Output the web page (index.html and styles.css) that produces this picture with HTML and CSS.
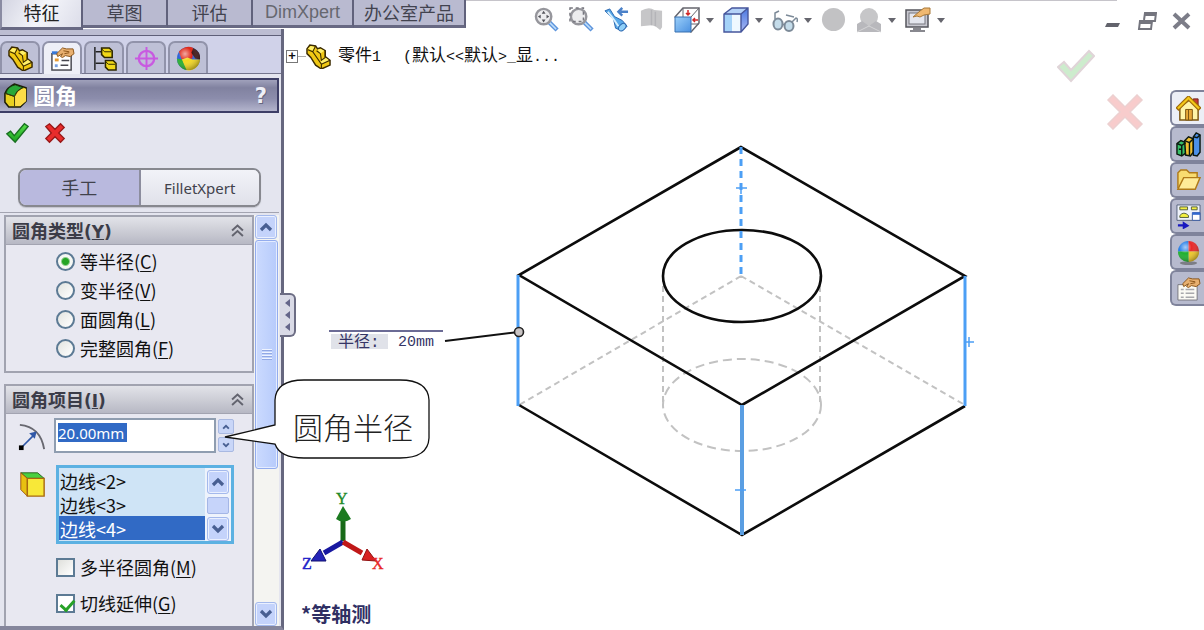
FILE: index.html
```html
<!DOCTYPE html>
<html lang="zh-CN">
<head>
<meta charset="utf-8">
<title>零件1 - 圆角</title>
<link rel="stylesheet" href="styles.css">
</head>
<body>
<svg class="defs" aria-hidden="true">
  <defs>
    <linearGradient id="blueFace" x1="0" y1="0" x2="1" y2="1"><stop offset="0" stop-color="#9cd0fa"/><stop offset="1" stop-color="#4a90e0"/></linearGradient>
    <linearGradient id="blueSide" x1="0" y1="0" x2="0" y2="1"><stop offset="0" stop-color="#4a78e0"/><stop offset="1" stop-color="#a8b8f4"/></linearGradient>
    <linearGradient id="greenTick" x1="0" y1="0" x2="0" y2="1"><stop offset="0" stop-color="#58e048"/><stop offset="1" stop-color="#18a020"/></linearGradient>
    <radialGradient id="shine" cx=".35" cy=".3" r=".75"><stop offset="0" stop-color="#fff" stop-opacity=".6"/><stop offset=".4" stop-color="#fff" stop-opacity="0"/><stop offset="1" stop-color="#000" stop-opacity=".35"/></radialGradient>
    <symbol id="part" viewBox="0 0 26 26">
      <path d="M1 5l3-4 6 1 2 3 3-1 5 3v6l5 4v5l-9 4-6-4-5-8-4-4z" fill="#f0c814" stroke="#3a2a00" stroke-width="1.500"/>
      <path d="M2 5l3-3 4 1-2 4zM12 6l3-1 4 2-4 3zM15 18l5-4 4 3-7 4z" fill="#fff06a"/>
      <path d="M2 6l5 2 9 13v4M7 8l3-6M15 10l1 7 4-3V7M15 10l-4-3M16 21l9-4" stroke="#3a2a00" stroke-width="1.100" fill="none"/>
    </symbol>
    <symbol id="hand" viewBox="0 0 26 26">
      <path d="M7 8l6-6 4 1 7 0 1 5-4 3-5-1-3 2-2-1 2-3-5 3z" fill="#e8b070" stroke="#8a5418"/>
      <path d="M14 5l6 1M15 8l5-1" stroke="#8a5418" fill="none"/>
    </symbol>
    <symbol id="props" viewBox="0 0 26 26">
      <rect x="2" y="8" width="20" height="17" fill="#fff" stroke="#46464e" stroke-width="1.5"/>
      <path d="M2 7h6" stroke="#3878d8" stroke-width="3"/>
      <rect x="5" y="13" width="4" height="3" fill="#e89a30"/><rect x="5" y="19" width="3" height="3" fill="#78a0e0"/>
      <path d="M12 15h8M11 20h8" stroke="#46464e" stroke-width="1.5"/>
      <use href="#hand"/>
    </symbol>
    <symbol id="config" viewBox="0 0 26 26">
      <path d="M3 1v24M4 6h8M4 18h9" stroke="#222" stroke-width="1.5"/>
      <path d="M10 2h8l3 3v7h-8l-3-3zM14 15h8l3 3v7h-8l-3-3z" fill="#f0d818" stroke="#2c2600" stroke-width="1.6"/>
      <path d="M10 3l3 3h7M14 16l3 3h7" stroke="#2c2600" fill="none"/>
    </symbol>
    <symbol id="target" viewBox="0 0 26 26">
      <path d="M13 5v8H5a8 8 0 0 1 8-8zM13 13h8a8 8 0 0 1-8 8z" fill="#d8a0ea" opacity=".5"/>
      <g fill="none" stroke="#c85ae0" stroke-width="2.4"><circle cx="13" cy="13" r="8"/><path d="M13 1v24M1 13h24" stroke-width="2"/></g>
    </symbol>
    <symbol id="ball" viewBox="0 0 26 26">
      <circle cx="13" cy="13" r="12" fill="#2c62d8"/>
      <path d="M3 6a12 12 0 0 1 15-4l-1 11-11 1z" fill="#e02818"/><path d="M18 2a12 12 0 0 1 7 12l-5-1-4-6z" fill="#401818"/>
      <path d="M6 14l6-2 5 2 8 0A12 12 0 0 1 10 25z" fill="#f4d820"/><path d="M1 13l5 1 5 11A12 12 0 0 1 1 13z" fill="#28b030"/>
      <circle cx="13" cy="13" r="12" fill="url(#shine)"/>
    </symbol>
    <symbol id="ball4" viewBox="0 0 26 26">
      <ellipse cx="13" cy="24" rx="9" ry="2" fill="#555" opacity=".6"/>
      <path d="M13 12V1A11 11 0 0 0 2 12z" fill="#2880e8"/><path d="M13 12h11A11 11 0 0 0 13 1z" fill="#e82828"/>
      <path d="M13 12v11A11 11 0 0 0 24 12z" fill="#f0c828"/><path d="M13 12H2a11 11 0 0 0 11 11z" fill="#20b030"/>
      <circle cx="13" cy="12" r="11" fill="url(#shine)"/>
    </symbol>
    <symbol id="chev" viewBox="0 0 12 12"><path d="M1 6l5-4.500 5 4.500M1 11l5-4.500 5 4.500" fill="none" stroke="#63646f" stroke-width="1.8"/></symbol>
    <symbol id="up" viewBox="0 0 14 10"><path d="M2 8l5-5 5 5" fill="none" stroke="#485f92" stroke-width="3.200"/></symbol>
    <symbol id="down" viewBox="0 0 14 10"><path d="M2 2l5 5 5-5" fill="none" stroke="#485f92" stroke-width="3.200"/></symbol>
    <symbol id="lens" viewBox="0 0 26 26">
      <path d="M16 16l8 8" stroke="#5c94dc" stroke-width="4.500"/><path d="M16 16l7 7" stroke="#c0defa" stroke-width="1.500"/>
      <circle cx="10" cy="10" r="8" fill="#ececee" stroke="#96969c" stroke-width="2.500"/>
    </symbol>
  </defs>
</svg>

<div class="app">
  <header class="topbar">
    <nav class="ribbon">
      <button class="rtab rtab-on">特征</button>
      <button class="rtab">草图</button>
      <button class="rtab">评估</button>
      <button class="rtab rtab-dim">DimXpert</button>
      <button class="rtab rtab-wide">办公室产品</button>
    </nav>
    <div class="viewtools">
      <button class="tool" aria-label="整屏显示全图"><svg class="ico" viewBox="0 0 26 26"><use href="#lens"/><path d="M10 4l2 3H8zM10 16l2-3H8zM4 10l3-2v4zM16 10l-3-2v4z" fill="#55555c"/></svg></button>
      <button class="tool" aria-label="局部放大"><svg class="ico" viewBox="0 0 26 26"><use href="#lens"/><path d="M1 1h14v14H1z" fill="none" stroke="#77777f" stroke-width="1.500" stroke-dasharray="3 3"/></svg></button>
      <button class="tool" aria-label="上一视图"><svg class="ico" viewBox="0 0 26 26"><path d="M1 4l5-2 5 8 8 4 5 6-5 5-7-3-2-9z" fill="#58a8e8" stroke="#2c68b0"/><path d="M4 5l7 9 4 6" stroke="#d8f0ff" stroke-width="2" fill="none"/><ellipse cx="19" cy="21" rx="4.500" ry="3" transform="rotate(-45 19 21)" fill="#90d0f8" stroke="#2c68b0"/><path d="M25 5h-8M19 1l-4 4 4 4" stroke="#4a80c8" stroke-width="2.500" fill="none"/></svg></button>
      <button class="tool" aria-label="剖面视图"><svg class="ico" viewBox="0 0 26 26"><path d="M2 4q8-5 14-1l8 1v17l-2 3-5-4-4-1-11 1z" fill="#c6c6c8"/><path d="M13 3v16M17 5v15" stroke="#b4b4b8" stroke-width="1.500"/></svg></button>
      <button class="tool tool-menu" aria-label="视图定向"><svg class="ico" viewBox="0 0 26 26"><path d="M1 10L9 1h16v15l-8 9z" fill="#fff" stroke="#66666e" stroke-width="1.500"/><path d="M9 1v9M25 1l-8 9M17 17l8 0" stroke="#66666e"/><path d="M14 3v5M12 6l2 2 2-2M24 13h-5M21 11l-2 2 2 2" stroke="#d02828" fill="none" stroke-width="1.500"/><path d="M1 10h16v15H1z" fill="url(#blueFace)" stroke="#3870b0"/></svg><i class="caret"></i></button>
      <button class="tool tool-menu" aria-label="显示样式"><svg class="ico" viewBox="0 0 26 26"><path d="M1 7l8-6h16l-7 6z" fill="#b4d2f8"/><path d="M18 7l7-6v16l-7 8z" fill="url(#blueSide)"/><path d="M1 7h17v18H1z" fill="#eef8ff"/><path d="M1 7h8v18H1z" fill="#a4d2f8"/><path d="M1 7l8-6h16v16l-7 8H1zM1 7h17v18M18 7l7-6" fill="none" stroke="#46569c" stroke-width="1.400"/></svg><i class="caret"></i></button>
      <button class="tool tool-menu" aria-label="隐藏/显示项目"><svg class="ico" viewBox="0 0 26 26"><g fill="#c4dcea" stroke="#7c8a98" stroke-width="2"><ellipse cx="6" cy="17" rx="4.500" ry="5.500"/><ellipse cx="17" cy="19" rx="4.500" ry="5"/></g><path d="M3 12V6l4-2M10 17l3 1M20 15l4-4q2 0 1 4M14 8l8 2" fill="none" stroke="#7c8a98" stroke-width="1.500"/></svg><i class="caret"></i></button>
      <button class="tool" aria-label="编辑外观"><svg class="ico" viewBox="0 0 26 26"><circle cx="13" cy="13" r="12" fill="#c2c2c4"/></svg></button>
      <button class="tool tool-menu" aria-label="应用布景"><svg class="ico" viewBox="0 0 26 26"><circle cx="13" cy="10" r="9" fill="#c6c6c8"/><path d="M1 25v-8l5-3 7 5 7-5 5 3v8z" fill="#b8b8bc"/><path d="M1 25l12-6 12 6" stroke="#d4d4d6" fill="none"/></svg><i class="caret"></i></button>
      <button class="tool tool-menu" aria-label="视图设定"><svg class="ico" viewBox="0 0 26 26"><rect x="1" y="3" width="22" height="17" fill="#c8c8d0" stroke="#55555c" stroke-width="1.500"/><rect x="4" y="6" width="16" height="11" fill="#e4e6ee" stroke="#77777f"/><path d="M8 21h8v2h4v2H5v-2h3z" fill="#88888f"/><path d="M8 10l7-6 4-3h6v6l-6 1-4 2-3-1z" fill="#f0b870" stroke="#a87838"/></svg><i class="caret"></i></button>
    </div>
    <div class="wincontrols">
      <button class="win" aria-label="最小化"><svg class="wico" viewBox="0 0 20 20"><path d="M3 16l2-4h13l-2 4z" fill="#62636c"/></svg></button>
      <button class="win" aria-label="还原"><svg class="wico" viewBox="0 0 20 20"><path d="M7 9l1-7h11l-1 8h-2M7 4h12M2 18l1-8h12l-1 8zM3 12h12" fill="none" stroke="#74757e" stroke-width="2"/></svg></button>
      <button class="win" aria-label="关闭"><svg class="wico" viewBox="0 0 20 20"><path d="M2 3l15 14M17 3L2 17" stroke="#7c7d88" stroke-width="4"/></svg></button>
    </div>
  </header>

  <div class="body">
    <aside class="panel">
      <div class="ptabs">
        <button class="ptab" aria-label="设计树"><svg class="ico"><use href="#part"/></svg></button>
        <button class="ptab ptab-on" aria-label="属性"><svg class="ico"><use href="#props"/></svg></button>
        <button class="ptab" aria-label="配置"><svg class="ico"><use href="#config"/></svg></button>
        <button class="ptab" aria-label="尺寸"><svg class="ico"><use href="#target"/></svg></button>
        <button class="ptab" aria-label="外观"><svg class="ico"><use href="#ball"/></svg></button>
      </div>
      <div class="ptitle">
        <svg class="ico" viewBox="0 0 26 26"><path d="M2 11Q4 5 12 1l12 4v14l-6 6H6l-4-5z" fill="#e8d020" stroke="#1c1c08" stroke-width="1.600"/><path d="M3 11Q5 3 13 2l8 3q-7 2-9 9z" fill="#28a838" stroke="#103c10"/><path d="M12 14q3-6 8-8l4 0v13l-6 5h-6z" fill="#fcdc48"/><path d="M12 14v10M3 11l9 3q2-6 8-9" fill="none" stroke="#3c3408"/></svg>
        <h1 class="ptext">圆角</h1>
        <button class="help">?</button>
      </div>
      <div class="confirm">
        <button class="plain" aria-label="确定"><svg class="ico" viewBox="0 0 26 26"><path d="M2 14l4-3 4 5L21 3l4 3-14 17z" fill="url(#greenTick)" stroke="#187020" stroke-width="1.500"/></svg></button>
        <button class="plain" aria-label="取消"><svg class="ico" viewBox="0 0 26 26"><path d="M3 6l4-3 6 6 6-6 4 4-6 6 6 6-4 4-6-6-6 6-4-4 6-6z" fill="#e82c2c" stroke="#981818" stroke-width="1.400"/></svg></button>
      </div>
      <div class="modes">
        <button class="mode mode-on">手工</button>
        <button class="mode">FilletXpert</button>
      </div>
      <div class="scroller">
        <div class="groups">
          <section class="group">
            <h2 class="ghead"><span>圆角类型<span class="key">(<u>Y</u>)</span></span><svg class="chev"><use href="#chev"/></svg></h2>
            <div class="choices">
              <label class="opt"><input class="radio" type="radio" name="type" checked><span>等半径(<u>C</u>)</span></label>
              <label class="opt"><input class="radio" type="radio" name="type"><span>变半径(<u>V</u>)</span></label>
              <label class="opt"><input class="radio" type="radio" name="type"><span>面圆角(<u>L</u>)</span></label>
              <label class="opt"><input class="radio" type="radio" name="type"><span>完整圆角(<u>F</u>)</span></label>
            </div>
          </section>
          <section class="group group-last">
            <h2 class="ghead"><span>圆角项目<span class="key">(<u>I</u>)</span></span><svg class="chev"><use href="#chev"/></svg></h2>
            <div class="items">
              <svg class="rowico" viewBox="0 0 30 30"><path d="M2 2q22 2 26 26" fill="none" stroke="#686870" stroke-width="2"/><path d="M4 26L18 12" stroke="#3058a8" stroke-width="1.800"/><path d="M20 9l-2 8-6-6z" fill="#3058a8"/><path d="M1 24h5v5H1z" fill="#000"/></svg>
              <div class="field">
                <input class="num" type="text" value="20.00mm" aria-label="圆角半径">
                <div class="spin">
                  <button class="sbtn" aria-label="增加"><svg class="tiny"><use href="#up"/></svg></button>
                  <button class="sbtn" aria-label="减少"><svg class="tiny"><use href="#down"/></svg></button>
                </div>
              </div>
              <svg class="rowico" viewBox="0 0 30 30"><path d="M3 3h18l7 6H10z" fill="#48d040" stroke="#28601c"/><path d="M3 3l7 6v19l-7-7z" fill="#e8c010" stroke="#9a5410"/><path d="M10 9h18v19H10z" fill="#f8e838" stroke="#a86810" stroke-width="1.500"/></svg>
              <div class="listbox">
                <select class="list" size="3" aria-label="边线">
                  <option>边线&lt;2&gt;</option>
                  <option>边线&lt;3&gt;</option>
                  <option selected>边线&lt;4&gt;</option>
                </select>
                <div class="lscroll">
                  <button class="scrbtn" aria-label="向上"><svg class="arrow"><use href="#up"/></svg></button>
                  <div class="lthumb"></div>
                  <button class="scrbtn" aria-label="向下"><svg class="arrow"><use href="#down"/></svg></button>
                </div>
              </div>
            </div>
            <div class="checks">
              <label class="opt"><input class="check" type="checkbox"><span>多半径圆角(<u>M</u>)</span></label>
              <label class="opt"><input class="check" type="checkbox" checked><span>切线延伸(<u>G</u>)</span></label>
            </div>
          </section>
        </div>
        <div class="vscroll">
          <button class="scrbtn" aria-label="向上滚动"><svg class="arrow"><use href="#up"/></svg></button>
          <div class="thumb"><i class="grip"></i></div>
          <button class="scrbtn vend" aria-label="向下滚动"><svg class="arrow"><use href="#down"/></svg></button>
        </div>
      </div>
    </aside>

    <main class="viewport">
      <svg class="scene" viewBox="284 29 920 601" role="img" aria-label="等轴测模型">
        <g fill="none" stroke="#c2c2c2" stroke-width="2" stroke-dasharray="6 4">
          <path d="M741 276L519 405M741 276l224 129M663 276v129M820 276v129"/>
          <ellipse cx="742" cy="405" rx="79" ry="46" stroke-dasharray="9 5"/>
        </g>
        <g fill="none" stroke="#0c0c0c" stroke-width="2.600">
          <path d="M741 147L519 275l223 130 223-129zM519 405l223 130 223-129"/>
          <ellipse cx="742" cy="276" rx="79" ry="46"/>
        </g>
        <g fill="none" stroke="#4c9ff5">
          <path d="M518 275v131M965 276v130" stroke-width="3"/>
          <path d="M741 147v128" stroke-width="3" stroke-dasharray="7 5"/>
          <path d="M742 405v130" stroke-width="4" stroke="#5a9ee2"/>
          <path d="M736 188h11M741 183v11M964 342h10M969 337v10M735 490h11" stroke-width="1.500"/>
        </g>
        <path d="M445 341l74-9" stroke="#111" stroke-width="2"/>
        <circle cx="519" cy="332" r="4.500" fill="#c9c4c4" stroke="#222" stroke-width="1.600"/>
        <path d="M329 331h114" stroke="#3a3a72" stroke-width="1.500"/>
        <path d="M331 334h57v15h-57z" fill="#e0e2e9"/>
        <text x="338" y="347" class="dim">半径:</text>
        <text x="398" y="346" class="dim dim-val">20mm</text>
        <path d="M343 541v-21" stroke="#186a18" stroke-width="5"/><path d="M343 506l8 13q-8 5-15 0z" fill="#1c7a20"/>
        <path d="M343 542l-19 11" stroke="#1818a0" stroke-width="5"/><path d="M311 561l9-12 6 12z" fill="#2424b8" stroke="#101070"/>
        <path d="M343 542l19 11" stroke="#c01818" stroke-width="5"/><path d="M376 561l-9-12-5 11z" fill="#d82020" stroke="#901010"/>
        <text x="336" y="504" class="axis axis-y">Y</text>
        <text x="302" y="569" class="axis axis-z">Z</text>
        <text x="372" y="569" class="axis axis-x">X</text>
        <text x="301" y="622" class="orient">*等轴测</text>
      </svg>
      <div class="tree">
        <button class="expand" aria-label="展开">+</button><i class="branch"></i>
        <svg class="ico"><use href="#part"/></svg>
        <span class="tname">零件<span class="mono">1</span></span>
        <span class="tconf"><span class="mono">(</span>默认<span class="mono">&lt;&lt;</span>默认<span class="mono">&gt;_</span>显<span class="mono">...</span></span>
      </div>
      <button class="corner corner-ok" aria-label="接受"><svg class="cico" viewBox="0 0 38 36"><path d="M1 19l6-5 7 8L32 3l5 5-23 25z" fill="#cdeccd" stroke="#e0d4d8" stroke-width="2"/></svg></button>
      <button class="corner corner-no" aria-label="放弃"><svg class="cico" viewBox="0 0 38 36"><path d="M2 6l5-5 12 12L31 1l5 5-12 12 12 12-5 5-12-12L7 35l-5-5 12-12z" fill="#f8cccc" stroke="#ecd0d0" stroke-width="1.500"/></svg></button>
      <nav class="taskpane">
        <button class="task task-on" aria-label="资源"><svg class="ico" viewBox="0 0 26 26"><path d="M18 3h5v9h-5z" fill="#c83838" stroke="#702018"/><path d="M4 12v13h19V12l-9-8z" fill="#fff4a8" stroke="#7a5410" stroke-width="1.500"/><path d="M1 14L13 2l12 12" fill="none" stroke="#a06a08" stroke-width="4.500"/><path d="M2 13L13 2l11 11" fill="none" stroke="#f4c818" stroke-width="2.200"/><path d="M10 14h7v11h-7z" fill="#e8a838" stroke="#7a5410"/><path d="M13 14v11" stroke="#7a5410"/></svg></button>
        <button class="task" aria-label="设计库"><svg class="ico" viewBox="0 0 26 26"><g stroke="#0c1810" stroke-width="1.500"><path d="M1 12l4-3 5 2v11l-4 3-5-2z" fill="#38c068"/><path d="M9 9l4-4 5 2v14l-3 4-5-1z" fill="#f0c030"/><path d="M18 5l3-4 4 2v18l-3 4-4-1z" fill="#4c90e8"/><path d="M1 12l5 2 4-3M6 14v11M9 9l5 2 4-4M14 11v13M18 5l4 1 3-3M3 18h3" fill="none"/></g></svg></button>
        <button class="task" aria-label="文件探索器"><svg class="ico" viewBox="0 0 26 26"><path d="M2 21V5l3-3h6l3 3h8v5" fill="#f8dc70" stroke="#b07a18" stroke-width="1.500"/><path d="M2 22l6-12h17l-5 12z" fill="#ffec98" stroke="#b07a18" stroke-width="1.500"/></svg></button>
        <button class="task" aria-label="视图调色板"><svg class="ico" viewBox="0 0 26 26"><path d="M1 1h24v16H1z" fill="#eef2fa" stroke="#55607c"/><g fill="#f4f040" stroke="#55603c"><path d="M4 3h8v3H4zM16 3h6v3h-6zM4 12q4-5 9 0v2H4z"/></g><path d="M17 9h8v8h-8z" fill="#fff" stroke="#3858a0"/><path d="M17 10h8" stroke="#3068d0" stroke-width="2.500"/><path d="M2 21h5v-3l7 4.500-7 4v-3H2z" fill="#1818c0"/></svg></button>
        <button class="task" aria-label="外观"><svg class="ico"><use href="#ball4"/></svg></button>
        <button class="task" aria-label="自定义属性"><svg class="ico" viewBox="0 0 26 26"><path d="M2 9h20v16H2z" fill="#fbfaf4" stroke="#77777f"/><path d="M5 14h3M10 14h9M5 18h3M10 18h9M5 22h3M10 22h9" stroke="#a8a8ac" stroke-width="1.500"/><use href="#hand"/></svg></button>
      </nav>
      <button class="flyout" aria-label="折叠面板"><i></i><i></i><i></i></button>
      <div class="callout">
        <svg class="bubble" viewBox="0 0 206 80"><path d="M51 46V21Q52 1 80 1h96q28 0 29 20v38q-1 20-29 20H80Q56 79 51 65L1 58z" fill="#fff" stroke="#111" stroke-width="1.300"/></svg>
        <span class="calltext">圆角半径</span>
      </div>
    </main>
  </div>
</div>
</body>
</html>
```
FILE: styles.css
```css
* { box-sizing: border-box; }
body {
  margin: 0;
  background: #fff;
  color: #111;
  font-family: "Noto Sans CJK SC", "Noto Sans", sans-serif;
  font-size: 18px;
  line-height: 24px;
}
button {
  margin: 0;
  padding: 0;
  border: 0;
  background: none;
  color: inherit;
  font: inherit;
}
.defs { position: absolute; width: 0; height: 0; }
.app { display: flex; flex-direction: column; min-height: 100vh; }
.ico { display: block; width: 25px; height: 25px; flex: none; }

/* Top bar */
.topbar { display: flex; height: 29px; position: relative; z-index: 2; }
.ribbon { display: flex; align-items: flex-start; flex: none; }
.rtab {
  width: 85px;
  height: 28px;
  padding-bottom: 3px;
  border-right: 2px solid #61627c;
  border-bottom: 3px solid #686983;
  background: #b9bad0;
  color: #42434f;
}
.rtab-on {
  width: 83px;
  height: 30px;
  padding-bottom: 5px;
  border-left: 2px solid #8a8ba2;
  background: linear-gradient(120deg, #d4d5e2, #f4f5fa 50%, #dcdde9);
  color: #222;
}
.rtab-dim { width: 101px; color: #66676f; font-family: "Liberation Sans", sans-serif; }
.rtab-wide { width: 112px; }
.viewtools {
  display: flex;
  align-items: flex-start;
  flex: 1;
  height: 34px;
  padding: 6px 0 0 63px;
  border-top: 1px solid #c6c4ca;
}
.tool { display: flex; align-items: center; justify-content: center; width: 35px; }
.tool-menu { width: 49px; gap: 6px; }
.tool-menu .ico { width: 26px; height: 26px; }
.caret { border: 4px solid transparent; border-top: 5px solid #66666e; border-bottom: 0; }
.wincontrols {
  display: flex;
  align-items: flex-start;
  justify-content: flex-end;
  flex: none;
  width: 87px;
  padding: 11px 12px 0 0;
  gap: 15px;
}
.win { flex: none; width: 20px; }
.wico { display: block; width: 20px; height: 20px; }

/* Property panel */
.body { display: flex; flex: 1; }
.panel {
  display: flex;
  flex-direction: column;
  width: 284px;
  flex: none;
  padding-right: 2px;
  border-right: 3px solid #66677f;
  border-bottom: 4px solid #85869c;
  background: #e4e5ef;
}
.ptabs {
  display: flex;
  gap: 2px;
  margin-right: -2px;
  padding-top: 6px;
  border-top: 6px solid #bcbdd2;
  border-bottom: 1px solid #75768e;
  background: #d0d2e9;
  box-shadow: inset 0 1px #5e5f78;
}
.ptab {
  display: flex;
  align-items: center;
  justify-content: center;
  width: 40px;
  height: 32px;
  border: 2px solid #9193aa;
  border-bottom: 0;
  border-radius: 7px 7px 0 0;
  background: #bec0d6;
}
.ptab-on { margin-bottom: -1px; height: 33px; background: #eeeff7; }
.ptitle {
  display: flex;
  align-items: center;
  height: 35px;
  margin-top: 4px;
  padding: 0 10px 0 3px;
  border: 2px solid #3d3e66;
  border-left: 0;
  background: linear-gradient(#a0a1bb, #8182a0 25%, #8c8dac 60%, #b3b4cc);
}
.ptext { flex: 1; margin: 0 0 4px 5px; color: #fff; font-size: 22px; line-height: 28px; }
.help { color: #eef0f8; font: bold 21px/24px "DejaVu Sans", sans-serif; text-shadow: 1px 1px #66677f; }
.confirm { display: flex; gap: 14px; padding: 8px 5px 0; }
.plain .ico { width: 24px; height: 24px; }
.modes {
  display: flex;
  margin: 23px 18px 0 18px;
  border: 2px solid #87888f;
  border-radius: 8px;
  overflow: hidden;
  box-shadow: 0 1px 1px #c2c3cc;
}
.mode {
  flex: 1;
  height: 35px;
  background: linear-gradient(#f2f3f8, #e0e1ea);
  color: #41424c;
  font-family: "Noto Sans", "Noto Sans CJK SC", sans-serif;
  font-size: 15px;
}
.mode-on { border-right: 2px solid #8c8d9e; background: #b9b9de; font-size: 18px; }
.scroller { display: flex; flex: 1; margin-top: 5px; padding-top: 2px; border-top: 1px solid #a3a4b1; }
.groups { display: flex; flex-direction: column; gap: 11px; flex: 1; padding-left: 4px; }
.group { border: 2px solid #a1a3b0; background: #e8e8f1; }
.group-last { flex: 1; border-bottom: 0; }
.ghead {
  display: flex;
  align-items: center;
  justify-content: space-between;
  height: 28px;
  margin: 0;
  padding: 0 8px 0 6px;
  border-bottom: 1px solid #a3a4b1;
  background: linear-gradient(#e2e3e9, #cfd0d8 45%, #b7b8c4);
  color: #3b3c48;
  font-size: 18px;
  line-height: 24px;
}
.key { font-family: "DejaVu Sans", sans-serif; font-size: 17px; }
.chev { width: 13px; height: 13px; }
.choices { display: flex; flex-direction: column; gap: 5px; padding: 4px 0 11px 50px; }
.opt { display: flex; align-items: center; gap: 5px; height: 24px; white-space: nowrap; }
.opt u { text-underline-offset: 2px; text-decoration-thickness: 1px; }
.radio, .check { appearance: none; flex: none; width: 19px; height: 19px; margin: 0; border: 2px solid #5c7a94; }
.radio { border-radius: 50%; background: linear-gradient(135deg, #e2e4e0, #fff); }
.radio:checked { background: radial-gradient(circle, #25a525 0 3px, #f6f8f4 5px); }
.check { background: linear-gradient(135deg, #dfe0dc, #fff); }
.check:checked {
  background: #fff linear-gradient(#fff, #fff);
  position: relative;
}
.check:checked::after {
  content: "";
  position: absolute;
  left: 5px;
  top: 1px;
  width: 6px;
  height: 11px;
  border: solid #27a127;
  border-width: 0 3px 3px 0;
  transform: rotate(42deg);
}
.items {
  display: grid;
  grid-template-columns: 30px 180px;
  column-gap: 6px;
  row-gap: 12px;
  padding: 4px 0 0 12px;
}
.rowico { width: 28px; height: 28px; margin-top: 5px; }
.field { display: flex; gap: 2px; }
.num {
  width: 162px;
  height: 35px;
  padding: 0 2px 6px;
  border: 2px solid #8f9db0;
  border-radius: 0;
  background: linear-gradient(#316ac5, #316ac5) 2px 3px / 69px 19px no-repeat #fff;
  color: #fff;
  font-family: "Noto Sans", sans-serif;
  font-size: 15px;
}
.spin { display: flex; flex-direction: column; justify-content: space-between; padding: 1px 0; }
.sbtn {
  display: flex;
  align-items: center;
  justify-content: center;
  width: 16px;
  height: 15px;
  border: 1px solid #a9b9e2;
  border-radius: 2px;
  background: #c9d6f8;
}
.tiny { width: 8px; height: 6px; }
.listbox { display: flex; margin-left: 2px; width: 178px; height: 79px; border: 3px solid #5cb1e2; background: #cfe4f6; }
.list {
  appearance: none;
  flex: 1;
  min-width: 0;
  height: 73px;
  padding: 0;
  border: 0;
  outline: 0;
  border-radius: 0;
  overflow: hidden;
  background: #cfe4f6;
  color: #111;
  font: 18px/24px "Noto Sans CJK SC", sans-serif;
}
.list option { height: 24px; min-height: 24px; padding: 0 1px; line-height: 24px; }
.list option:checked { background: #316ac5 linear-gradient(#316ac5, #316ac5); color: #fff; }
.lscroll { display: flex; flex-direction: column; gap: 3px; padding: 2px 2px 0; background: #eef3fc; }
.lthumb { flex: 1; border: 1px solid #a4b6e6; border-radius: 2px; background: #c6d4fa; }
.scrbtn {
  display: flex;
  align-items: center;
  justify-content: center;
  flex: none;
  width: 22px;
  height: 24px;
  border: 1px solid #a4b9ec;
  border-radius: 3px;
  background: #c4d3fb;
  box-shadow: inset 0 0 0 1px #eaf0ff;
}
.arrow { width: 14px; height: 10px; }
.checks { display: flex; flex-direction: column; gap: 12px; padding: 11px 0 8px 50px; }
.vscroll { display: flex; flex-direction: column; flex: none; width: 25px; padding: 0 1px; background: #f4f4f1; }
.thumb {
  display: flex;
  align-items: center;
  justify-content: center;
  height: 229px;
  margin-top: 1px;
  border: 1px solid #93acee;
  border-radius: 3px;
  background: linear-gradient(90deg, #cbdafe, #b7cbfb);
  box-shadow: inset 0 0 0 1px #e4ecff;
}
.grip { width: 10px; height: 11px; background: repeating-linear-gradient(#eef3ff 0 1px, #91a8e4 1px 2px, transparent 2px 3px); }
.vend { margin-top: auto; }

/* Graphics area */
.viewport { position: relative; flex: 1; min-width: 0; }
.scene { position: absolute; inset: 0; width: 100%; height: 100%; }
.dim { font: 16px "Liberation Mono", "Noto Sans CJK SC", monospace; fill: #353566; }
.dim-val { font-size: 15px; }
.axis { font: 16px "Liberation Serif", serif; stroke-width: 0.4; }
.axis-y { fill: #1f8a28; stroke: #1f8a28; }
.axis-z { fill: #2020c8; stroke: #2020c8; }
.axis-x { fill: #e82828; stroke: #e82828; }
.orient { font: bold 20px "Noto Sans CJK SC", sans-serif; fill: #2f2f63; }
.tree { position: relative; display: flex; align-items: center; padding: 11px 0 0 2px; font-size: 17px; line-height: 28px; white-space: nowrap; }
.expand { width: 12px; height: 13px; border: 1px solid #777; font: bold 13px/10px "Liberation Sans", sans-serif; }
.branch { width: 8px; border-top: 1px solid #aaa; }
.tname { margin-left: 7px; }
.tconf { margin-left: 22px; }
.mono { font-family: "Liberation Mono", monospace; font-size: 15px; }
.corner { position: absolute; }
.cico { display: block; width: 38px; height: 36px; }
.corner-ok { right: 109px; top: 19px; }
.corner-no { right: 60px; top: 65px; }
.taskpane { position: absolute; right: 0; top: 61px; display: flex; flex-direction: column; }
.task {
  display: flex;
  align-items: center;
  justify-content: center;
  width: 34px;
  height: 36px;
  border: 2px solid #7f839b;
  border-right: 0;
  border-radius: 6px 0 0 6px;
  background: #b7bace;
}
.task-on { background: #eceef6; }
.flyout {
  position: absolute;
  left: -4px;
  top: 264px;
  display: flex;
  flex-direction: column;
  align-items: center;
  justify-content: space-evenly;
  width: 16px;
  height: 44px;
  border: 2px solid #6c6d84;
  border-left: 0;
  border-radius: 0 6px 6px 0;
  background: #d9dae6;
}
.flyout i { border: 4px solid transparent; border-left: 0; border-right: 5px solid #65668a; }
.callout { position: absolute; left: -60px; top: 350px; width: 206px; height: 80px; }
.bubble { display: block; width: 206px; height: 80px; }
.calltext { position: absolute; left: 69px; top: 27px; font-size: 30px; line-height: 40px; color: #222; font-weight: 300; white-space: nowrap; }
```
